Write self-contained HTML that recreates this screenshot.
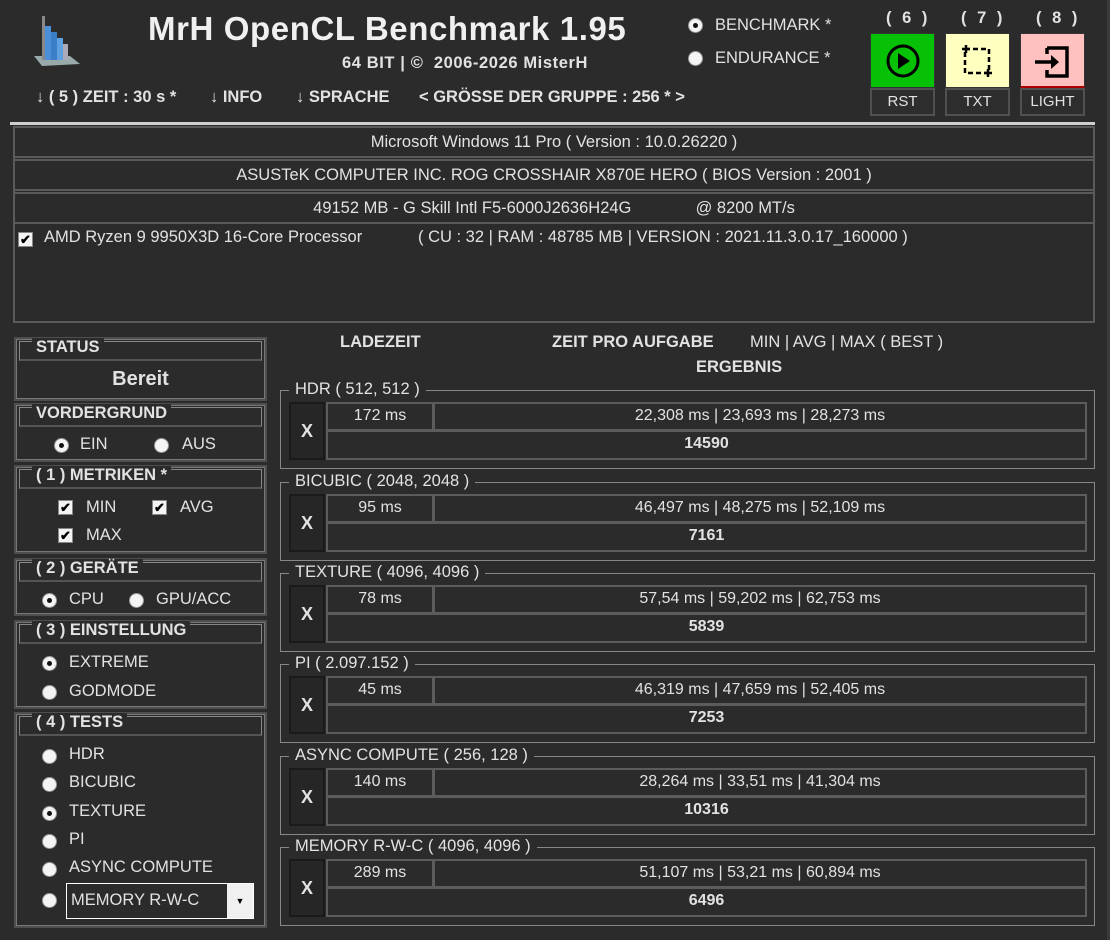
<!DOCTYPE html>
<html><head><meta charset="utf-8"><style>
*{box-sizing:border-box;margin:0;padding:0}
body{width:1110px;height:940px;background:#2b2b2b;overflow:hidden;position:relative;font-family:"Liberation Sans",sans-serif;color:#e2e2e2;font-size:16.5px}
.a{position:absolute;white-space:nowrap}
.b{font-weight:bold}
.c{text-align:center}
.rad{position:absolute;width:15px;height:15px;border-radius:50%;background:#f4f4f4;border:1px solid #999}
.rad.on::after{content:"";position:absolute;left:4px;top:4px;width:5px;height:5px;border-radius:50%;background:#111}
.chk{position:absolute;width:15px;height:15px;background:#f4f4f4;border:1px solid #888;color:#000;font-size:13px;line-height:13px;text-align:center;font-weight:bold}
.gb{position:absolute;left:14px;width:253px;border:2px solid #4e4e4e;outline:1px solid #777;outline-offset:-3px}
.gt{position:absolute;left:3px;right:3px;top:2px;height:20px;border-top:1px solid #888;border-left:1px solid #888;border-right:1px solid #888;border-bottom:2px solid #555}
.gt span{position:absolute;left:12px;top:-4px;background:#2b2b2b;padding:0 4px;font-weight:bold;font-size:16.5px}
.rg{position:absolute;left:280px;width:815px;height:79px;border-left:1px solid #888;border-right:1px solid #888;border-bottom:1px solid #888}
.rg .t{position:absolute;left:0;right:0;top:0;border-top:1px solid #888}
.rg .t span{position:absolute;left:8px;top:-11px;background:#2b2b2b;padding:0 6px;font-size:16.5px;line-height:19px}
.x{position:absolute;left:8px;top:12px;width:36px;height:58px;background:#262626;border:2px solid #1a1a1a;font-weight:bold;font-size:18px;text-align:center;line-height:54px}
.cl{position:absolute;border:2px solid #5c5c5c;text-align:center;font-size:16px;line-height:24px}
.info{position:absolute;left:13px;width:1082px;height:32px;border:2px solid #5a5a5a;text-align:center;line-height:28px;font-size:16.5px}
.btn{position:absolute;top:33px;width:65px;height:55px;border:1px solid #333}
.lb{position:absolute;top:88px;width:65px;height:28px;border:2px solid #505050;background:#2d2d2d;text-align:center;line-height:24px;font-size:15px}
</style></head><body>
<div class="a" style="right:0;top:0;width:3px;height:940px;background:#3a3a3a"></div>
<svg class="a" style="left:30px;top:12px" width="52" height="58" viewBox="0 0 52 58">
<path d="M4 44 L40 44 L50 52 L12 54 Z" fill="#9aa"/>
<rect x="12" y="4" width="3" height="44" fill="#888"/>
<rect x="15" y="14" width="6" height="34" fill="#4a8fd8"/>
<rect x="21" y="20" width="6" height="28" fill="#3c7ec8"/>
<rect x="27" y="26" width="6" height="22" fill="#5fa0e0"/>
<rect x="33" y="32" width="5" height="16" fill="#aab"/>
</svg>
<div class="a b" style="left:148px;top:10px;font-size:33px;letter-spacing:0.6px;color:#f0f0f0">MrH OpenCL Benchmark 1.95</div>
<div class="a b" style="left:342px;top:54px;font-size:16.5px;letter-spacing:0.6px">64 BIT | ©&nbsp; 2006-2026 MisterH</div>
<div class="a b" style="left:36px;top:88px;font-size:16.5px">↓ ( 5 ) ZEIT : 30 s *</div>
<div class="a b" style="left:210px;top:88px;font-size:16.5px">↓ INFO</div>
<div class="a b" style="left:296px;top:88px;font-size:16.5px">↓ SPRACHE</div>
<div class="a b" style="left:419px;top:88px;font-size:16.5px">&lt; GRÖSSE DER GRUPPE : 256 * &gt;</div>
<div class="rad on" style="left:688px;top:18px"></div>
<div class="a" style="left:715px;top:16px">BENCHMARK *</div>
<div class="rad" style="left:688px;top:51px"></div>
<div class="a" style="left:715px;top:49px">ENDURANCE *</div>
<div class="a b" style="left:886px;top:9px;letter-spacing:3px">( 6 )</div>
<div class="a b" style="left:961px;top:9px;letter-spacing:3px">( 7 )</div>
<div class="a b" style="left:1036px;top:9px;letter-spacing:3px">( 8 )</div>
<div class="btn" style="left:870px;background:#07c107"><svg width="63" height="53"><circle cx="32" cy="27" r="15" fill="none" stroke="#000" stroke-width="3"/><path d="M27 19 L39 27 L27 35 Z" fill="#000"/></svg></div>
<div class="btn" style="left:945px;background:#ffffc0"><svg width="63" height="53"><rect x="19" y="15" width="24" height="24" fill="none" stroke="#000" stroke-width="2.5" stroke-dasharray="5 3"/><path d="M16 15h8M20 11v8M38 39h8M42 35v8" stroke="#000" stroke-width="2.5"/></svg></div>
<div class="btn" style="left:1020px;background:#ffc0c0;border-bottom:2px solid #a00"><svg width="63" height="53"><path d="M26 14 H46 V42 H26 V36 M26 20 V14" fill="none" stroke="#000" stroke-width="3.5"/><path d="M14 28 H36" stroke="#000" stroke-width="3.5"/><path d="M30 21 L38 28 L30 35 Z" fill="#000"/></svg></div>
<div class="lb" style="left:870px">RST</div>
<div class="lb" style="left:945px">TXT</div>
<div class="lb" style="left:1020px">LIGHT</div>
<div class="a" style="left:10px;top:122px;width:1085px;height:3px;background:#cfcfcf"></div>
<div class="a" style="left:13px;top:126px;width:1082px;height:197px;border:2px solid #5a5a5a"></div>
<div class="info" style="top:126px">Microsoft Windows 11 Pro ( Version : 10.0.26220 )</div>
<div class="info" style="top:159px">ASUSTeK COMPUTER INC. ROG CROSSHAIR X870E HERO ( BIOS Version : 2001 )</div>
<div class="info" style="top:192px">49152 MB - G Skill Intl F5-6000J2636H24G &nbsp;&nbsp;&nbsp;&nbsp;&nbsp;&nbsp;&nbsp;&nbsp;&nbsp;&nbsp;&nbsp;&nbsp; @ 8200 MT/s</div>
<div class="chk" style="left:18px;top:232px">✔</div>
<div class="a" style="left:44px;top:228px">AMD Ryzen 9 9950X3D 16-Core Processor</div>
<div class="a" style="left:418px;top:228px">( CU : 32 | RAM : 48785 MB | VERSION : 2021.11.3.0.17_160000 )</div>
<div class="gb" style="top:337px;height:64px"><div class="gt"><span>STATUS</span></div><div class="a b" style="left:0;right:0;top:29px;text-align:center;font-size:20px">Bereit</div></div>
<div class="gb" style="top:403px;height:59px"><div class="gt"><span>VORDERGRUND</span></div>
<div class="rad on" style="left:38px;top:33px"></div><div class="a" style="left:64px;top:30px">EIN</div>
<div class="rad" style="left:138px;top:33px"></div><div class="a" style="left:166px;top:30px">AUS</div></div>
<div class="gb" style="top:465px;height:89px"><div class="gt"><span>( 1 ) METRIKEN *</span></div>
<div class="chk" style="left:42px;top:33px">✔</div><div class="a" style="left:70px;top:31px">MIN</div>
<div class="chk" style="left:136px;top:33px">✔</div><div class="a" style="left:164px;top:31px">AVG</div>
<div class="chk" style="left:42px;top:61px">✔</div><div class="a" style="left:70px;top:59px">MAX</div></div>
<div class="gb" style="top:558px;height:58px"><div class="gt"><span>( 2 ) GERÄTE</span></div>
<div class="rad on" style="left:26px;top:33px"></div><div class="a" style="left:53px;top:30px">CPU</div>
<div class="rad" style="left:113px;top:33px"></div><div class="a" style="left:140px;top:30px">GPU/ACC</div></div>
<div class="gb" style="top:620px;height:89px"><div class="gt"><span>( 3 ) EINSTELLUNG</span></div>
<div class="rad on" style="left:26px;top:34px"></div><div class="a" style="left:53px;top:31px">EXTREME</div>
<div class="rad" style="left:26px;top:63px"></div><div class="a" style="left:53px;top:60px">GODMODE</div></div>
<div class="gb" style="top:712px;height:216px"><div class="gt"><span>( 4 ) TESTS</span></div>
<div class="rad" style="left:26px;top:35px"></div><div class="a" style="left:53px;top:31px">HDR</div>
<div class="rad" style="left:26px;top:63px"></div><div class="a" style="left:53px;top:59px">BICUBIC</div>
<div class="rad on" style="left:26px;top:92px"></div><div class="a" style="left:53px;top:88px">TEXTURE</div>
<div class="rad" style="left:26px;top:120px"></div><div class="a" style="left:53px;top:116px">PI</div>
<div class="rad" style="left:26px;top:148px"></div><div class="a" style="left:53px;top:144px">ASYNC COMPUTE</div>
<div class="rad" style="left:26px;top:179px"></div>
<div class="a" style="left:50px;top:169px;width:188px;height:36px;border:1px solid #fff;background:#2b2b2b"><div class="a" style="left:4px;top:7px">MEMORY R-W-C</div><div class="a" style="right:0;top:0;width:26px;height:34px;background:#f0f0f0;color:#000;font-size:9px;text-align:center;line-height:34px">▼</div></div>
</div>
<div class="a b" style="left:340px;top:333px">LADEZEIT</div>
<div class="a b" style="left:552px;top:333px">ZEIT PRO AUFGABE</div>
<div class="a" style="left:750px;top:333px">MIN | AVG | MAX ( BEST )</div>
<div class="a b" style="left:696px;top:358px">ERGEBNIS</div>
<div class="rg" style="top:390px"><div class="t"><span>HDR ( 512, 512 )</span></div><div class="x">X</div><div class="cl" style="left:45px;top:12px;width:108px;height:29px">172 ms</div><div class="cl" style="left:152px;top:12px;width:654px;height:29px">22,308 ms | 23,693 ms | 28,273 ms</div><div class="cl b" style="left:45px;top:40px;width:761px;height:30px">14590</div></div>
<div class="rg" style="top:482px"><div class="t"><span>BICUBIC ( 2048, 2048 )</span></div><div class="x">X</div><div class="cl" style="left:45px;top:12px;width:108px;height:29px">95 ms</div><div class="cl" style="left:152px;top:12px;width:654px;height:29px">46,497 ms | 48,275 ms | 52,109 ms</div><div class="cl b" style="left:45px;top:40px;width:761px;height:30px">7161</div></div>
<div class="rg" style="top:573px"><div class="t"><span>TEXTURE ( 4096, 4096 )</span></div><div class="x">X</div><div class="cl" style="left:45px;top:12px;width:108px;height:29px">78 ms</div><div class="cl" style="left:152px;top:12px;width:654px;height:29px">57,54 ms | 59,202 ms | 62,753 ms</div><div class="cl b" style="left:45px;top:40px;width:761px;height:30px">5839</div></div>
<div class="rg" style="top:664px"><div class="t"><span>PI ( 2.097.152 )</span></div><div class="x">X</div><div class="cl" style="left:45px;top:12px;width:108px;height:29px">45 ms</div><div class="cl" style="left:152px;top:12px;width:654px;height:29px">46,319 ms | 47,659 ms | 52,405 ms</div><div class="cl b" style="left:45px;top:40px;width:761px;height:30px">7253</div></div>
<div class="rg" style="top:756px"><div class="t"><span>ASYNC COMPUTE ( 256, 128 )</span></div><div class="x">X</div><div class="cl" style="left:45px;top:12px;width:108px;height:29px">140 ms</div><div class="cl" style="left:152px;top:12px;width:654px;height:29px">28,264 ms | 33,51 ms | 41,304 ms</div><div class="cl b" style="left:45px;top:40px;width:761px;height:30px">10316</div></div>
<div class="rg" style="top:847px"><div class="t"><span>MEMORY R-W-C ( 4096, 4096 )</span></div><div class="x">X</div><div class="cl" style="left:45px;top:12px;width:108px;height:29px">289 ms</div><div class="cl" style="left:152px;top:12px;width:654px;height:29px">51,107 ms | 53,21 ms | 60,894 ms</div><div class="cl b" style="left:45px;top:40px;width:761px;height:30px">6496</div></div>
</body></html>
